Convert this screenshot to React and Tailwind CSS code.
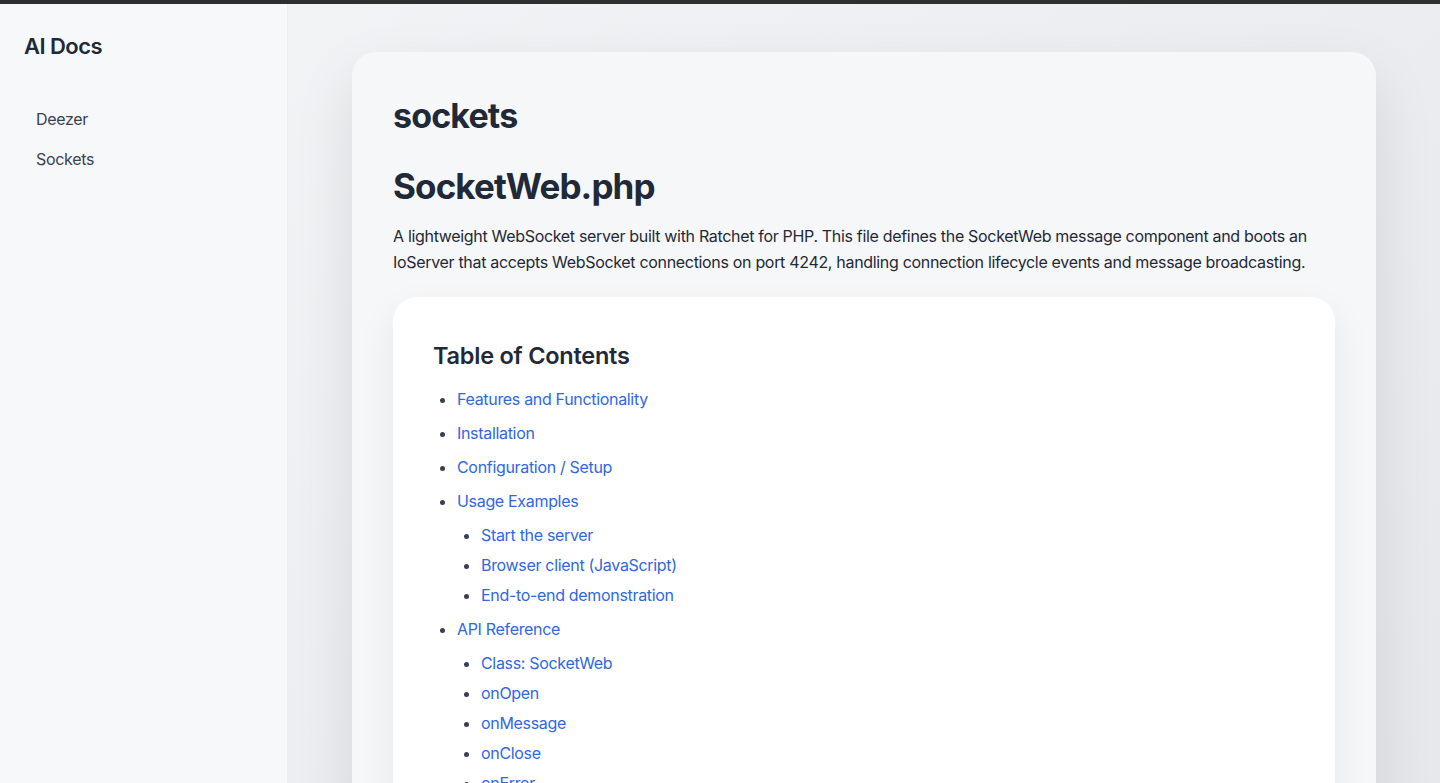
import React from "react";

const toc = [
  { label: "Features and Functionality" },
  { label: "Installation" },
  { label: "Configuration / Setup" },
  {
    label: "Usage Examples",
    children: ["Start the server", "Browser client (JavaScript)", "End-to-end demonstration"],
  },
  {
    label: "API Reference",
    children: ["Class: SocketWeb", "onOpen", "onMessage", "onClose", "onError", "Server bootstrap"],
  },
  { label: "Dependencies" },
  { label: "Notes and Limitations" },
];

const Sidebar = () => (
  <aside className="w-72 shrink-0 bg-[#f7f8fa] px-6 pt-[26px] pb-6 shadow-[1px_0_8px_rgba(0,0,0,0.04)] border-r border-[#eceef1]">
    <h1 className="text-[22px] leading-8 font-semibold text-[#1f2937] tracking-tight mb-[37px]">AI Docs</h1>
    <nav className="flex flex-col">
      {["Deezer", "Sockets"].map((item) => (
        <a key={item} href="#" className="px-3 py-2 text-base leading-6 tracking-[-0.02em] text-[#374151]">
          {item}
        </a>
      ))}
    </nav>
  </aside>
);

export default function App() {
  return (
    <div className="min-h-screen flex flex-col font-['Inter',sans-serif] text-[#1f2937]">
      {/* window top strip */}
      <div className="h-1 bg-[#2f2f2f] shrink-0" />
      <div className="flex flex-1">
        <Sidebar />
        <main className="flex-1 bg-gradient-to-br from-[#f2f3f5] to-[#e4e6ea] pt-12 pb-12 px-16">
          <div className="max-w-5xl mx-auto bg-[#f6f7f9] rounded-3xl p-[41px] shadow-[0_24px_60px_rgba(0,0,0,0.10)]">
            <h1 className="text-[34px] leading-10 font-bold tracking-tight text-[#1f2937] mt-[3px] mb-[28px]">sockets</h1>
            <h2 className="text-[35px] leading-[44px] font-bold tracking-tight text-[#1f2937] mb-[15px]">SocketWeb.php</h2>
            <p className="text-base leading-[26px] tracking-[-0.02em] text-[#1f2937] mb-[22px]">
              A lightweight WebSocket server built with Ratchet for PHP. This file defines the SocketWeb message
              component and boots an IoServer that accepts WebSocket connections on port 4242, handling connection
              lifecycle events and message broadcasting.
            </p>
            <div className="bg-white rounded-3xl px-10 pt-[43px] pb-10 shadow-[0_16px_40px_rgba(0,0,0,0.07)]">
              <h3 className="text-[23.5px] leading-8 font-semibold tracking-[-0.01em] text-[#1f2937] mb-[15px]">
                Table of Contents
              </h3>
              <ul className="list-disc pl-6 space-y-2.5 marker:text-[#374151] tracking-[-0.02em]">
                {toc.map((item) => (
                  <li key={item.label} className="leading-6">
                    <a href="#" className="text-[#2f68e0]">{item.label}</a>
                    {item.children && (
                      <ul className="list-disc pl-6 mt-2.5 space-y-1.5">
                        {item.children.map((c) => (
                          <li key={c} className="leading-6">
                            <a href="#" className="text-[#2f68e0]">{c}</a>
                          </li>
                        ))}
                      </ul>
                    )}
                  </li>
                ))}
              </ul>
            </div>
          </div>
        </main>
      </div>
    </div>
  );
}
